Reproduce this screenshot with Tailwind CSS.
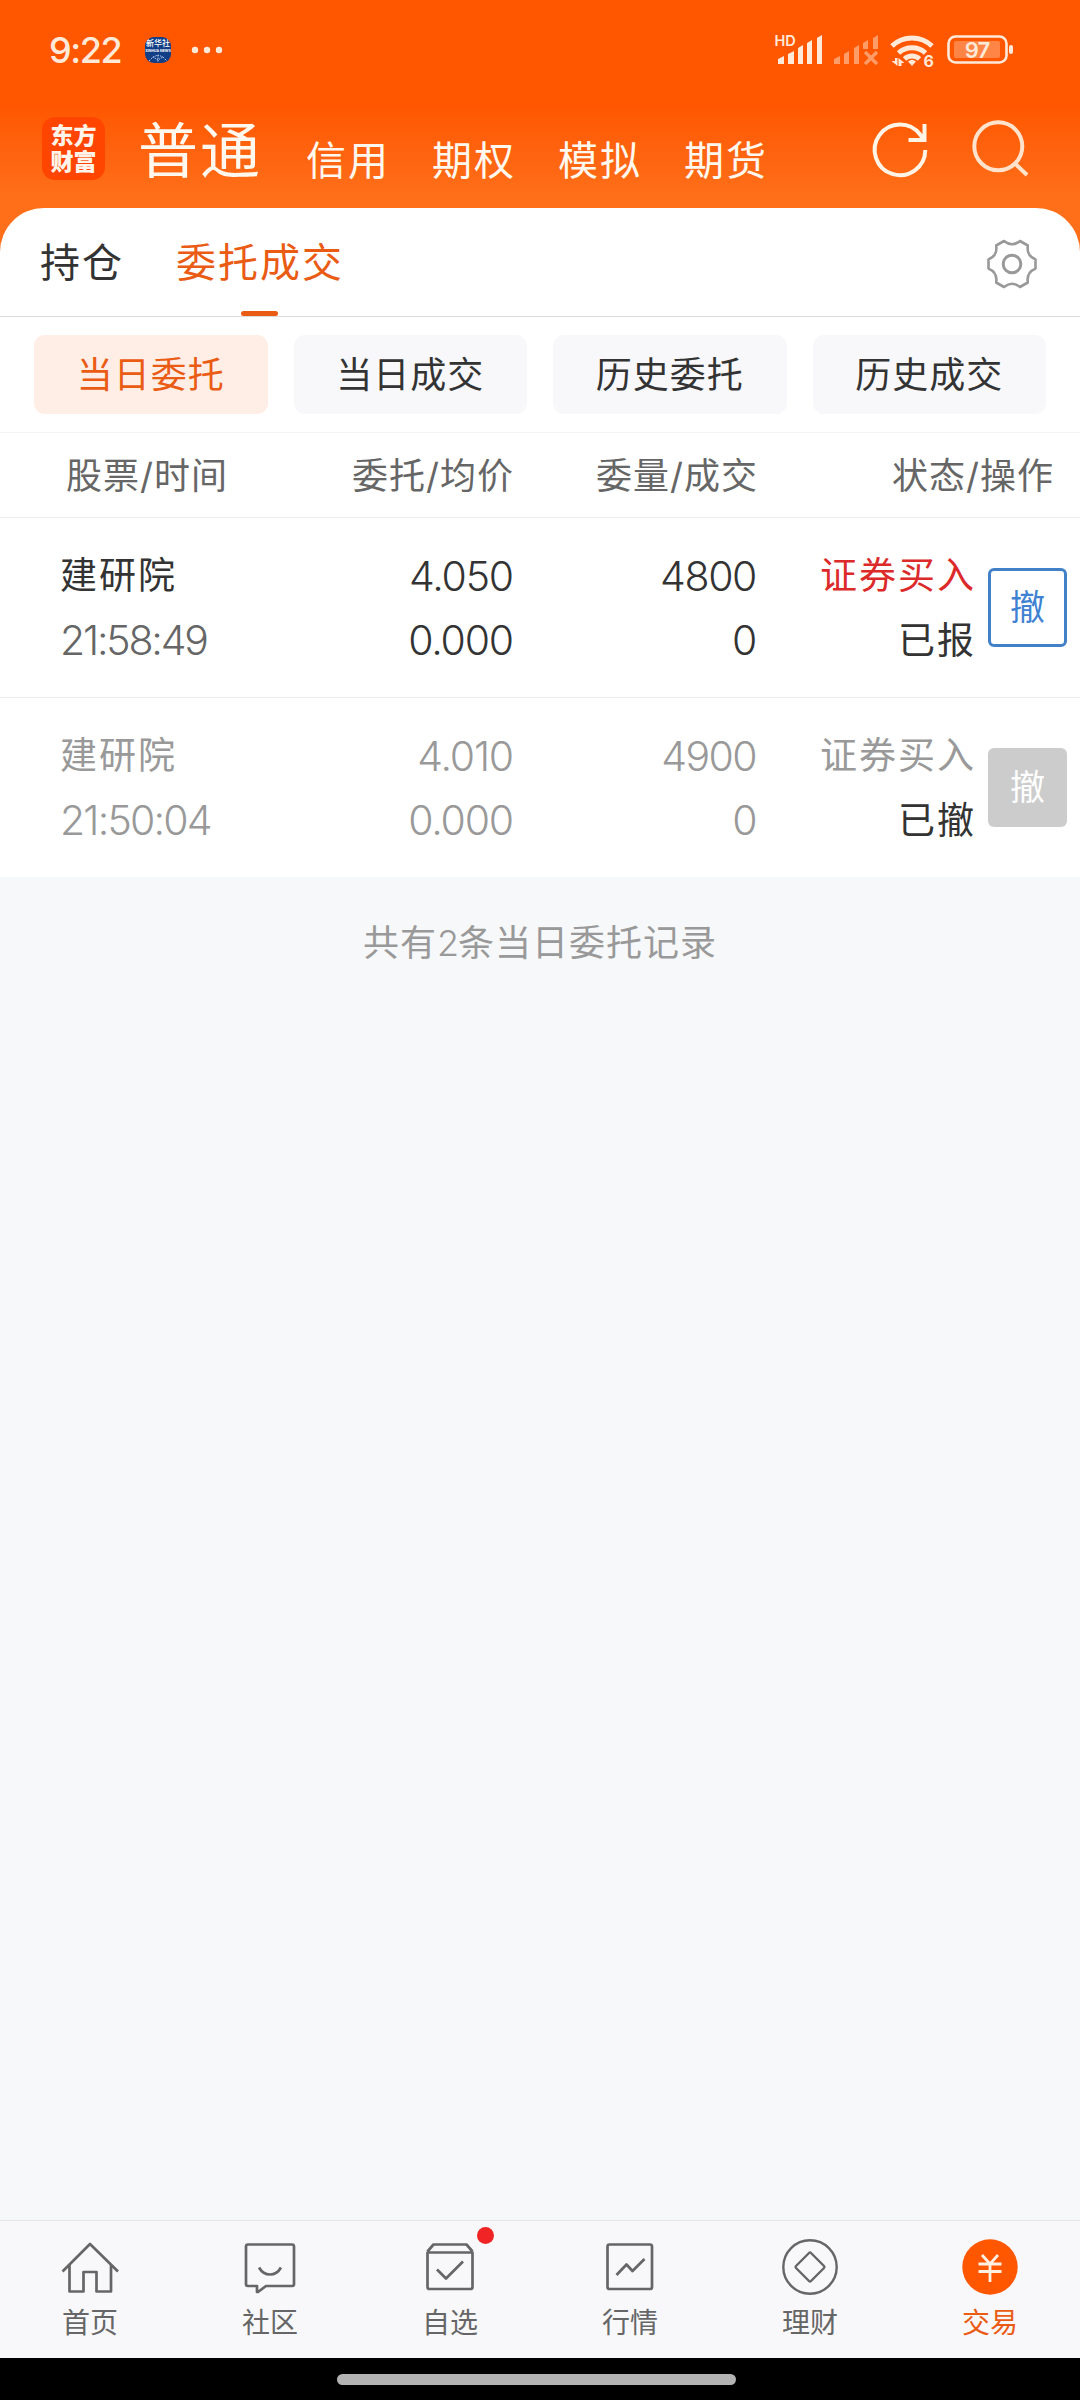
<!DOCTYPE html>
<html lang="zh-CN">
<head>
<meta charset="utf-8">
<title>委托成交</title>
<script src="https://cdn.jsdelivr.net/npm/@tailwindcss/browser@4"></script>
</head>
<body class="w-[1080px] h-[2400px] overflow-hidden bg-[#f7f8fa] font-['Inter','Noto_Sans_CJK_SC',sans-serif] text-[#333] flex flex-col whitespace-nowrap">
  <header class="h-[260px] shrink-0 bg-linear-to-b from-[#ff5600] from-40% to-[#ff6e18] to-75% text-[#fff8ee]">
    <!-- status bar -->
    <div class="h-[100px] pl-[49px] pr-[60px] flex items-center">
      <span class="w-[96px] text-[36px] font-medium tracking-[-1.400px] text-[#ffe9d8] leading-none">9:22</span>
      <span class="size-[26px] rounded-[9px] bg-[#123e86] overflow-hidden flex flex-col items-center text-white leading-none">
        <span class="text-[8px] leading-[12px] font-medium">新华社</span>
        <span class="text-[3.500px] leading-[5px] font-bold">XINHUA NEWS</span>
        <svg class="w-[20px] h-[8px]" viewBox="0 0 20 8" fill="none" stroke="#b9cdee" stroke-width="1" stroke-dasharray="1.5 1"><path d="M1 7 5 3l5 3 5-3 4 4M5 3l5-2 5 2M10 1v7"/></svg>
      </span>
      <svg class="ml-[20px] w-[32px] h-[8px]" viewBox="0 0 32 8" fill="#ffe9d8"><circle cx="4" cy="4" r="3.2"/><circle cx="16" cy="4" r="3.2"/><circle cx="28" cy="4" r="3.2"/></svg>
      <svg class="ml-auto w-[245px] h-[40px]" viewBox="775 30 245 40" fill="#ffe9d8">
        <text x="774.5" y="46" font-size="14.5" font-weight="600" font-family="Inter">HD</text>
        <path d="M778 59l6-3v8h-6zM788 54l6-3v13h-6zM798 48l5-3v19h-5zM807 43l5-3v24h-5zM817 38l5-3v29h-5z"/>
        <g fill="#ff9c68"><path d="M834 59l6-3v8h-6zM844 54l5-3v13h-5zM854 48l5-3v19h-5zM863 43l5-3v9h-5zM873 38l5-3v14h-5z"/><path d="M865 52l12 12M877 52l-12 12" stroke="#ff9c68" stroke-width="3.4"/></g>
        <g fill="none" stroke="#ffe9d8" stroke-width="5"><path d="M892 46a29 29 0 0 1 40 0M898.500 53a20 20 0 0 1 27 0M904.500 59a11 11 0 0 1 15 0"/></g>
        <path d="M908 61.500q4-3.500 8 0l-4 4.500zM895 58h2.500v8l-6-5h3.500zM898.500 66v-8l6 5h-3v3z"/>
        <text x="923.500" y="66.500" font-size="16" font-weight="700" font-family="Inter">6</text>
        <rect x="948.500" y="36.500" width="58" height="26" rx="7" fill="none" stroke="#ffe9d8" stroke-width="2.600"/>
        <rect x="954" y="41" width="46" height="17" rx="2" fill="#ff8546"/>
        <rect x="1009" y="45" width="4" height="9" rx="2"/>
        <text x="977" y="58" font-size="22" font-weight="600" text-anchor="middle" letter-spacing="-1" font-family="Inter">97</text>
      </svg>
    </div>
    <!-- account types -->
    <div class="h-[100px] pl-[42px] flex">
      <div class="mt-[17px] size-[63px] rounded-[13px] bg-[#ff4500] flex flex-col items-center justify-center text-[23px] leading-[26px] font-black text-[#fff4ea]"><span>东方</span><span>财富</span></div>
      <div class="ml-[33px] w-[168px] text-[60px] leading-[102px] tracking-[2px]">普通</div>
      <div class="flex gap-[42px] text-[40px] leading-[121px] tracking-[2px]"><span>信用</span><span>期权</span><span>模拟</span><span>期货</span></div>
      <svg class="ml-[100px] mt-[16px] w-[170px] h-[66px]" viewBox="868 116 170 66" fill="none" stroke="#fff4e6" stroke-width="4">
        <path d="M925.300 150a25.300 25.300 0 1 1-5-15.200L924.500 140.500M924.500 124v16h-16"/>
        <g stroke="#ffe3cc"><circle cx="998.300" cy="146.300" r="24"/><path d="M1014.500 163l12.500 12"/></g>
      </svg>
    </div>
  </header>

  <main class="-mt-[52px] rounded-t-[44px] bg-white">
    <nav class="h-[109px] border-b border-[#dcdcdc] pl-[40px] pr-[42px] flex items-center text-[40px] tracking-[2px]">
      <span class="w-[136px] h-[108px] leading-[110px]">持仓</span>
      <span class="relative h-[108px] leading-[110px] text-[#ea5b14]">委托成交<i class="absolute left-[65px] bottom-0 w-[37px] h-[5px] rounded-full bg-[#ea5b14]"></i></span>
      <svg class="ml-auto mt-[3px] size-[52px]" viewBox="-26 -26 52 52" fill="none" stroke="#999" stroke-width="2.600" stroke-linejoin="round">
        <path d="M-8-23Q0-16.500 8-23L15.800-18.500Q14.300-8.300 23.500-4.600V4.600Q14.300 8.300 15.800 18.500L8 23Q0 16.500-8 23L-15.800 18.500Q-14.300 8.300-23.500 4.600V-4.600Q-14.300-8.300-15.800-18.500Z"/>
        <circle r="8.800" stroke-width="3"/>
      </svg>
    </nav>
    <div class="h-[116px] border-b border-[#f4f4f4] pl-[34px] pr-[34px] pt-[18px] grid grid-cols-4 gap-[26px] text-[36px] tracking-[1px] leading-[80px] text-center">
      <span class="h-[79px] rounded-[11px] bg-[#ffeee6] text-[#ea5b14]">当日委托</span>
      <span class="h-[79px] rounded-[11px] bg-[#f8f8fb]">当日成交</span>
      <span class="h-[79px] rounded-[11px] bg-[#f8f8fb]">历史委托</span>
      <span class="h-[79px] rounded-[11px] bg-[#f8f8fb]">历史成交</span>
    </div>
    <div class="h-[85px] border-b border-[#ececec] pl-[66px] flex text-[36px] leading-[86px] tracking-[1px] text-[#666] text-right">
      <span class="w-[199px] text-left">股票/时间</span><span class="w-[249px]">委托/均价</span><span class="w-[244px]">委量/成交</span><span class="w-[296px]">状态/操作</span>
    </div>

    <div class="h-[180px] border-b border-[#ececec] pl-[60px] flex text-[41px] text-right">
      <div class="w-[200px] pt-[24px] flex flex-col text-left"><span class="h-[64px] text-[37px] leading-[67px] tracking-[2px]">建研院</span><span class="leading-[68px] tracking-[-2.200px] text-[#666] font-[350]">21:58:49</span></div>
      <div class="w-[253px] pt-[26px] flex flex-col leading-[64px] tracking-[-1.200px] font-[350]"><span>4.050</span><span>0.000</span></div>
      <div class="w-[243px] pt-[26px] flex flex-col leading-[64px] tracking-[-1.400px] font-[350]"><span>4800</span><span>0</span></div>
      <div class="w-[220px] pt-[24px] flex flex-col text-[37px] tracking-[2px]"><span class="h-[66px] leading-[67px] text-[#dc2a2a]">证券买入</span><span class="leading-[65px]">已报</span></div>
      <span class="ml-[12px] mt-[50px] w-[79px] h-[79px] rounded-[6px] border-3 border-[#4280c8] text-[#3f82d2] text-[35px] leading-[73px] text-center">撤</span>
    </div>
    <div class="h-[179px] pl-[60px] flex text-[41px] text-right text-[#999]">
      <div class="w-[200px] pt-[24px] flex flex-col text-left"><span class="h-[64px] text-[37px] leading-[67px] tracking-[2px]">建研院</span><span class="leading-[68px] tracking-[-1.800px] font-[350]">21:50:04</span></div>
      <div class="w-[253px] pt-[26px] flex flex-col leading-[64px] tracking-[-1.200px] font-[350]"><span>4.010</span><span>0.000</span></div>
      <div class="w-[243px] pt-[26px] flex flex-col leading-[64px] tracking-[-1.600px] font-[350]"><span>4900</span><span>0</span></div>
      <div class="w-[220px] pt-[24px] flex flex-col text-[37px] tracking-[2px]"><span class="h-[66px] leading-[67px]">证券买入</span><span class="leading-[65px] text-[#333]">已撤</span></div>
      <span class="ml-[12px] mt-[50px] w-[79px] h-[79px] rounded-[6px] bg-[#ccc] text-white text-[35px] leading-[79px] text-center">撤</span>
    </div>
  </main>
  <p class="pt-[38px] text-[36px] leading-[56px] tracking-[1px] text-center text-[#999]">共有<span class="tracking-[-1px] font-[350]">2</span>条当日委托记录</p>

  <footer class="mt-auto h-[138px] shrink-0 border-t border-[#e2e4e6] bg-[#f8f8fb] grid grid-cols-6 text-[28px] text-[#666]">
    <div class="flex flex-col items-center pt-[16px]">
      <svg class="size-[60px]" viewBox="60 2237 60 60" fill="none" stroke="#666" stroke-width="2.700" stroke-linejoin="round"><path d="M62.500 2271.500 90 2244l28 27.500M69.500 2265v26.500h14v-19.500h13v19.500h14.500v-26.500"/></svg>
      <span class="leading-[53px]">首页</span></div>
    <div class="flex flex-col items-center pt-[16px]">
      <svg class="size-[60px]" viewBox="240 2237 60 60" fill="none" stroke="#666" stroke-width="2.700" stroke-linejoin="round"><path d="M248 2244.500h44q2 0 2 2v37.500q0 2-2 2h-26l-8 6h-1v-6h-9q-2 0-2-2v-37.500q0-2 2-2zM259 2267.500q4 7 11 7t11-7"/></svg>
      <span class="leading-[53px]">社区</span></div>
    <div class="relative flex flex-col items-center pt-[16px]">
      <svg class="size-[60px]" viewBox="420 2237 60 60" fill="none" stroke="#666" stroke-width="2.700" stroke-linejoin="round"><path d="M427.500 2252.500v34.500q0 2 2 2h41q2 0 2-2v-34.500zM427.500 2251.500l6-7h33l6 7M437 2269.500l9 9 17-17"/></svg>
      <span class="leading-[53px]">自选</span>
      <i class="absolute left-[117px] top-[6px] size-[17px] rounded-full bg-[#f02424]"></i></div>
    <div class="flex flex-col items-center pt-[16px]">
      <svg class="size-[60px]" viewBox="600 2237 60 60" fill="none" stroke="#666" stroke-width="2.700" stroke-linejoin="round"><rect x="607.500" y="2244.500" width="44.500" height="44.500" rx="2"/><path d="M616.500 2275l10-10.500 6 6.500 12-12"/></svg>
      <span class="leading-[53px]">行情</span></div>
    <div class="flex flex-col items-center pt-[16px]">
      <svg class="size-[60px]" viewBox="780 2237 60 60" fill="none" stroke="#666" stroke-width="2.400" stroke-linejoin="round"><circle cx="810" cy="2267" r="26.700"/><path d="M809 2253q1-1 2 0l13 13q1 1 0 2l-13 13q-1 1-2 0l-13-13q-1-1 0-2z"/></svg>
      <span class="leading-[53px]">理财</span></div>
    <div class="flex flex-col items-center pt-[16px] text-[#ea5b14]">
      <svg class="size-[60px]" viewBox="960 2237 60 60" fill="none" stroke="#fff0e4" stroke-width="2.800"><circle cx="990" cy="2267" r="27.700" fill="#ff5600" stroke="none"/><path d="M982 2255l8 9 8-9M990 2264v18M978.500 2264h23M978.500 2271.500h23"/></svg>
      <span class="leading-[53px]">交易</span></div>
  </footer>
  <div class="h-[42px] shrink-0 bg-black pl-[337px] pt-[16px]"><div class="w-[399px] h-[11px] rounded-full bg-[#b3b3b3]"></div></div>
</body>
</html>
